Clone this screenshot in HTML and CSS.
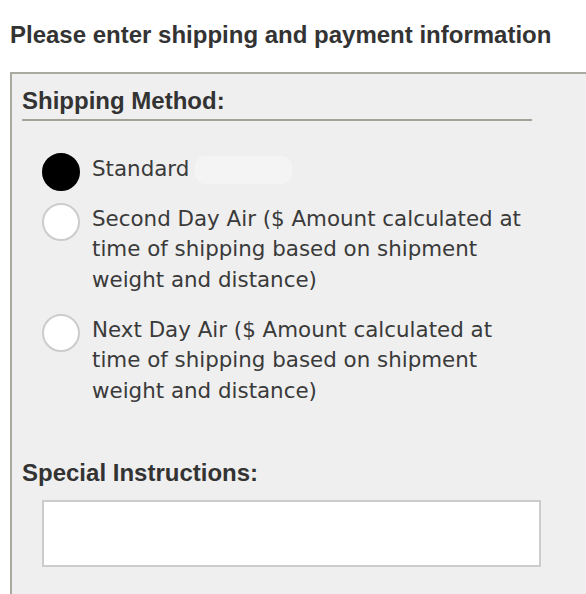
FILE: index.html
```html
<!DOCTYPE html>
<html>
<head>
<meta charset="utf-8">
<link rel="stylesheet" href="styles.css">
</head>
<body>
<h1 class="title">Please enter shipping and payment information</h1>
<div class="panel">
  <h2 class="section-head">Shipping Method:</h2>
  <div class="options">
    <label class="option">
      <span class="radio radio-checked"></span>
      <span class="opt-text">Standard <span class="blur"></span></span>
    </label>
    <label class="option">
      <span class="radio"></span>
      <span class="opt-text">Second Day Air ($ Amount calculated at time of shipping based on shipment weight and distance)</span>
    </label>
    <label class="option">
      <span class="radio"></span>
      <span class="opt-text">Next Day Air ($ Amount calculated at time of shipping based on shipment weight and distance)</span>
    </label>
  </div>
  <h2 class="sub-head">Special Instructions:</h2>
  <div class="textarea"></div>
</div>
</body>
</html>
```
FILE: styles.css
```css
html, body {
  margin: 0;
  padding: 0;
  background: #ffffff;
  overflow: hidden;
}
body {
  width: 586px;
  height: 594px;
}
.title {
  margin: 0;
  padding: 21px 0 0 10px;
  font-family: "Liberation Sans", Arial, sans-serif;
  font-weight: bold;
  font-size: 24px;
  line-height: 28px;
  color: #333333;
  white-space: nowrap;
}
.panel {
  margin: 23px 0 0 10px;
  width: 576px;
  height: 545px;
  background: #efefef;
  border-top: 2px solid #a9a9a0;
  border-left: 2px solid #a9a9a0;
  padding: 13px 0 0 10px;
  box-sizing: border-box;
  overflow: hidden;
}
.section-head {
  margin: 0;
  width: 510px;
  font-family: "Liberation Sans", Arial, sans-serif;
  font-weight: bold;
  font-size: 24px;
  line-height: 28px;
  color: #333333;
  padding-bottom: 4px;
  border-bottom: 2px solid #a5a397;
}
.options {
  display: flex;
  flex-direction: column;
  gap: 19.5px;
  padding: 32.5px 0 0 20px;
}
.option {
  display: flex;
  gap: 12px;
  align-items: flex-start;
}
.radio {
  flex: none;
  width: 34px;
  height: 34px;
  border-radius: 50%;
  background: #ffffff;
  border: 2px solid #cccccc;
  margin-top: -1px;
  margin-bottom: -8px;
}
.radio-checked {
  background: #000000;
  border-color: #000000;
}
.opt-text {
  width: 445px;
  font-family: "DejaVu Sans", Verdana, sans-serif;
  font-size: 21.4px;
  line-height: 30.5px;
  color: #3a3a3a;
}
.blur {
  display: inline-block;
  width: 97px;
  height: 28px;
  border-radius: 10px;
  background: #f4f4f4;
  vertical-align: middle;
  margin-left: -1px;
}
.sub-head {
  margin: 0;
  padding-top: 53px;
  font-family: "Liberation Sans", Arial, sans-serif;
  font-weight: bold;
  font-size: 24px;
  line-height: 28px;
  color: #333333;
}
.textarea {
  margin: 13px 0 0 20px;
  width: 499px;
  height: 67px;
  box-sizing: border-box;
  background: #ffffff;
  border: 2px solid #cccccc;
}
```
